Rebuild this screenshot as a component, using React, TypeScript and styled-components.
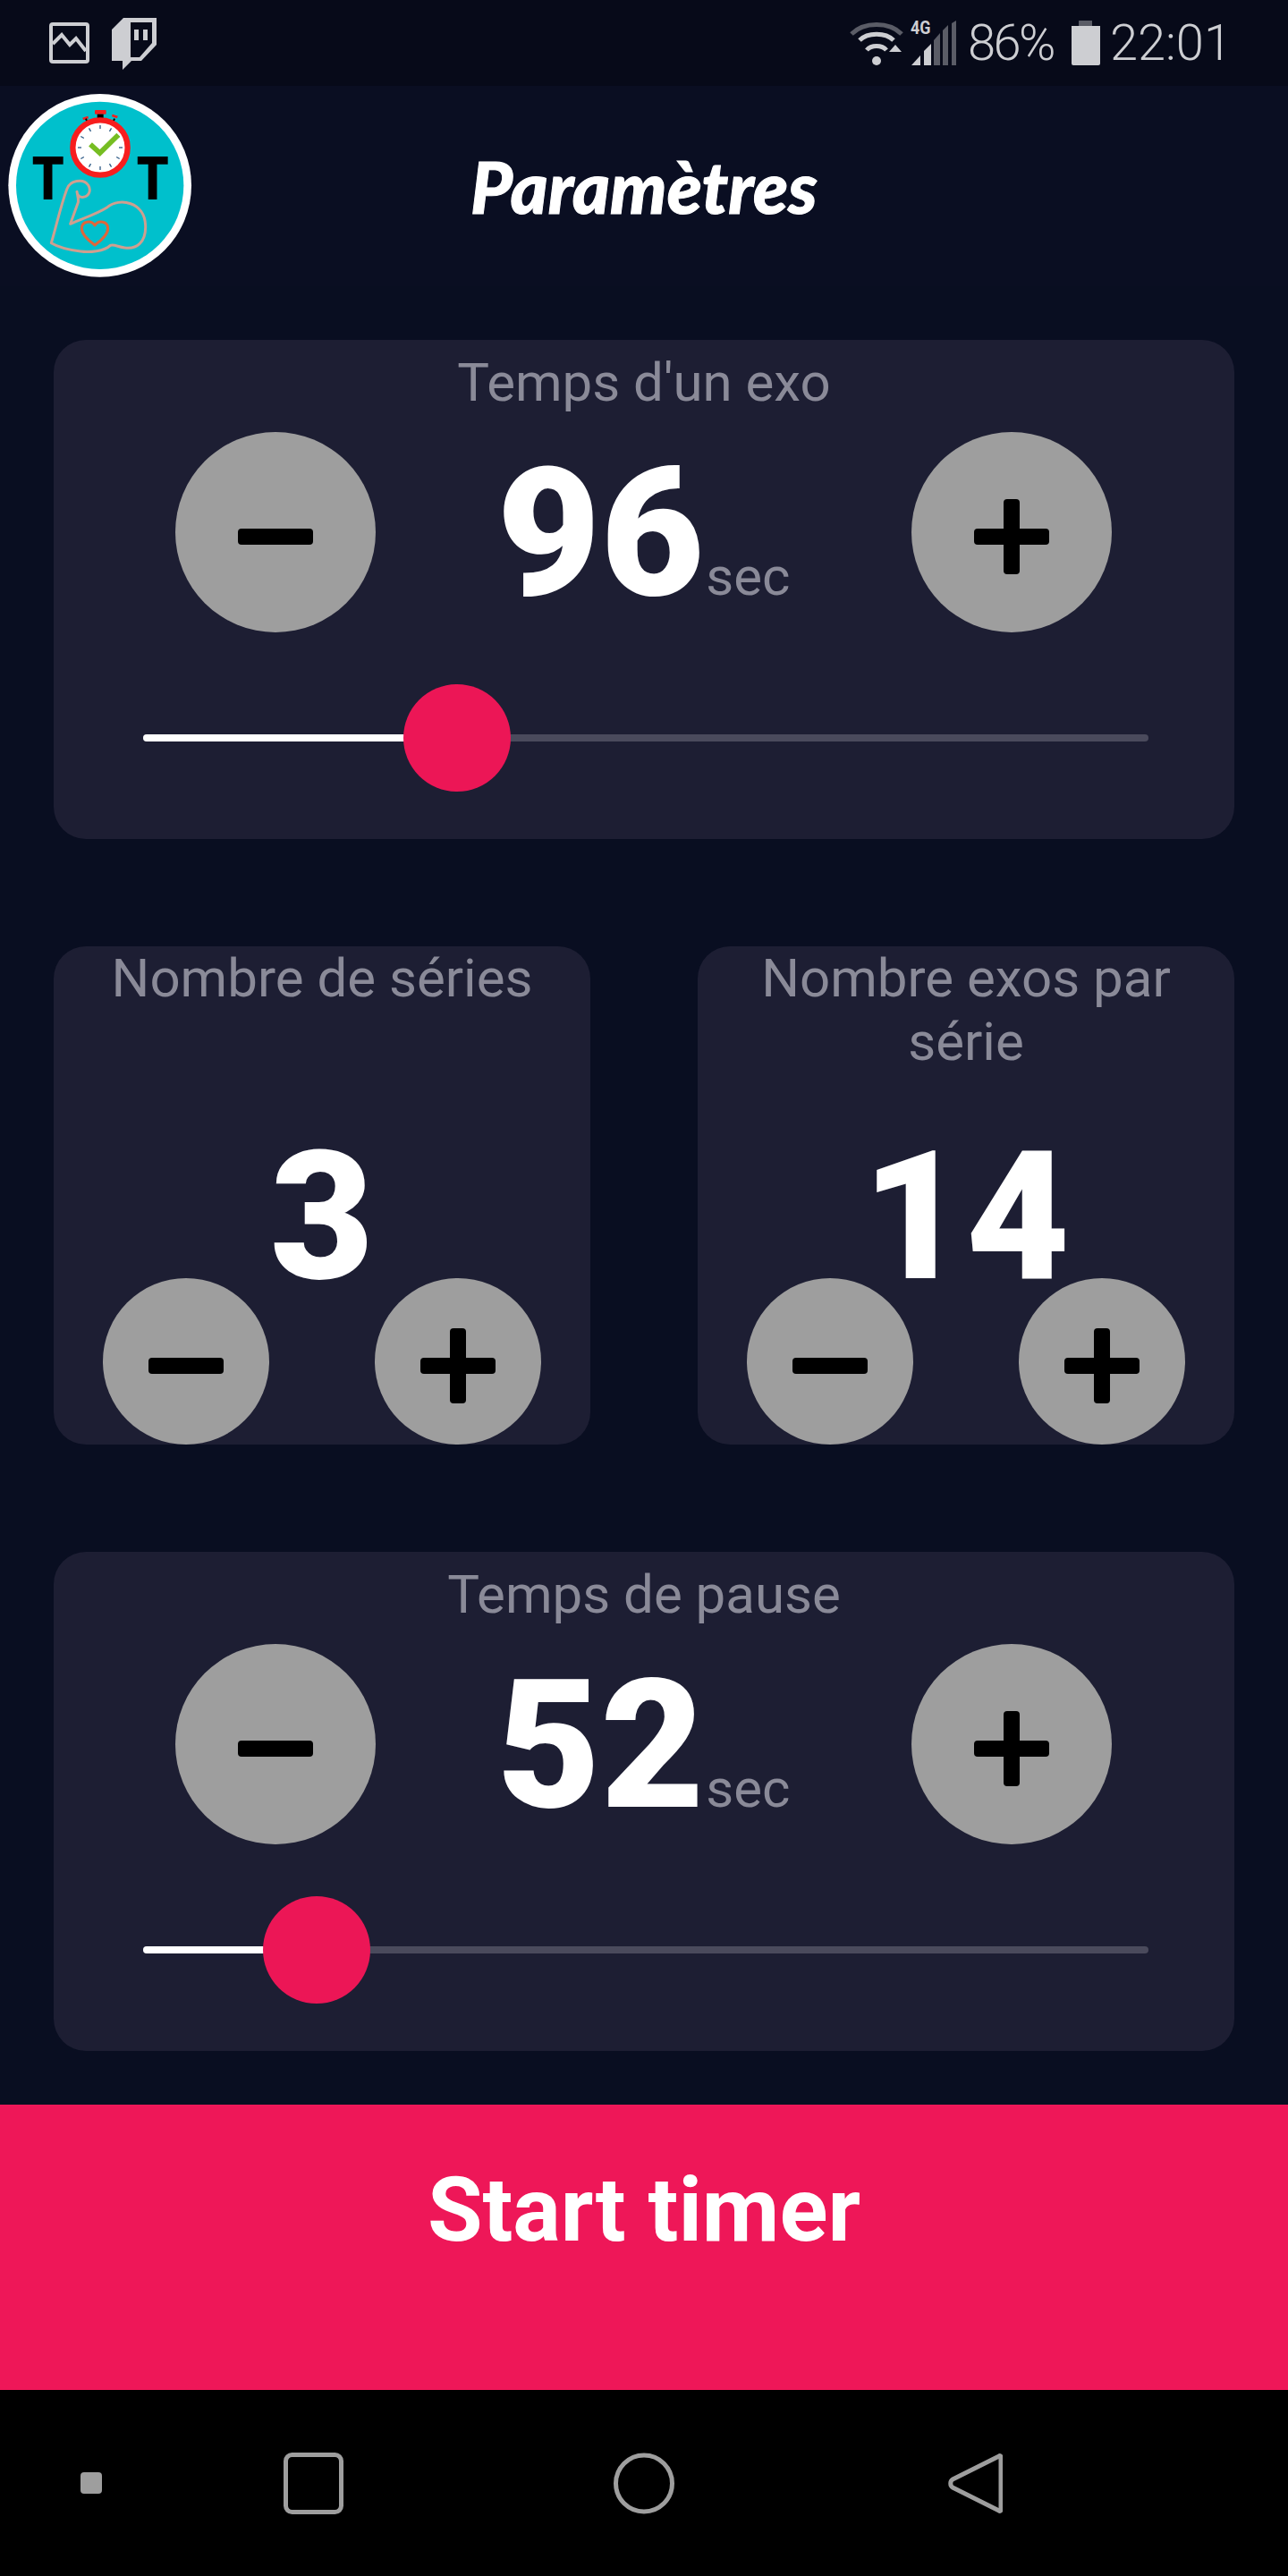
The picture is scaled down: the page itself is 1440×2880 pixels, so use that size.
import React from "react";
import styled, { createGlobalStyle } from "styled-components";

const GlobalStyle = createGlobalStyle`
  html, body {
    margin: 0;
    padding: 0;
    background: #090e21;
  }
  * {
    box-sizing: border-box;
  }
`;

const Page = styled.div`
  width: 1440px;
  height: 2880px;
  display: flex;
  flex-direction: column;
  font-family: Roboto, "Liberation Sans", sans-serif;
  background: #090e21;
  overflow: hidden;
`;

const StatusBar = styled.header`
  height: 96px;
  flex: none;
  display: flex;
  align-items: flex-start;
  justify-content: space-between;
  padding: 20px 63px 0 55px;
  background: #070a19;
  color: #cdced2;
`;

const StatusLeft = styled.div`
  display: flex;
  align-items: flex-start;
  gap: 25px;
`;

const StatusRight = styled.div`
  display: flex;
  align-items: flex-start;
`;

const StatusText = styled.span<{ $gap: number; $tight?: boolean }>`
  font-size: 56px;
  font-weight: 300;
  line-height: 64px;
  letter-spacing: ${(p) => (p.$tight ? "-2.5px" : "0")};
  margin-left: ${(p) => p.$gap}px;
  margin-top: -4px;
`;

const SignalBox = styled.div`
  position: relative;
  width: 51px;
  height: 54px;
  margin-left: 9px;
`;

const NetworkTag = styled.span`
  position: absolute;
  left: -1px;
  top: 1px;
  font-size: 21px;
  line-height: 20px;
  font-weight: 700;
  transform: scaleX(0.85);
  transform-origin: left top;
`;

const StatusIcon = styled.svg<{ $gap?: number; $top?: number }>`
  display: block;
  flex: none;
  margin-left: ${(p) => p.$gap ?? 0}px;
  margin-top: ${(p) => p.$top ?? 0}px;
`;

const SignalBars = styled.svg`
  display: block;
  margin-top: 3px;
`;

const Header = styled.div`
  height: 224px;
  flex: none;
  display: grid;
  grid-template-columns: 230px 1fr 230px;
  background: #0a0e22;
`;

const Logo = styled.svg`
  display: block;
  margin-top: -6px;
`;

const Title = styled.h1`
  margin: 0;
  padding-top: 62px;
  text-align: center;
  color: #fff;
  font-family: "Lato", "Liberation Sans", sans-serif;
  font-size: 80px;
  line-height: 100px;
  font-weight: 900;
  font-style: italic;
  -webkit-text-stroke: 1px #fff;
`;

const Content = styled.main`
  flex: 1;
  padding: 60px 60px 0;
  display: flex;
  flex-direction: column;
  gap: 120px;
`;

const Card = styled.section`
  background: #1d1e33;
  border-radius: 36px;
  height: 557.5px;
  display: flex;
  flex-direction: column;
`;

const Label = styled.div<{ $top: number }>`
  padding: ${(p) => p.$top}px 24px 0;
  text-align: center;
  color: #8a8a98;
  font-size: 60px;
  line-height: 71px;
`;

const Controls = styled.div`
  display: flex;
  align-items: center;
  justify-content: space-between;
  padding: 0 137px 0 136px;
  margin-top: 20px;
`;

const RoundButton = styled.button<{ $size: number }>`
  width: ${(p) => p.$size}px;
  height: ${(p) => p.$size}px;
  flex: none;
  border: 0;
  padding: 9px 0 0;
  border-radius: 50%;
  background: #9e9e9e;
  display: flex;
  align-items: center;
  justify-content: center;
`;

const Reading = styled.div`
  display: flex;
  align-items: baseline;
  gap: 2px;
  margin-top: 4px;
  color: #fff;
`;

const Number = styled.span`
  font-size: 200px;
  font-weight: 900;
  line-height: 200px;
  color: #fff;
`;

const Unit = styled.span`
  font-size: 60px;
  color: #8a8a98;
`;

const Slider = styled.div`
  position: relative;
  height: 8px;
  margin: 114px 96px 0 100px;
  border-radius: 4px;
  background: #4a4a5c;
`;

const SliderFill = styled.div`
  height: 100%;
  border-radius: 4px;
  background: #fff;
`;

const SliderThumb = styled.div`
  position: absolute;
  top: -56px;
  width: 120px;
  height: 120px;
  margin-left: -60px;
  border-radius: 50%;
  background: #ec1656;
`;

const CardRow = styled.div`
  display: grid;
  grid-template-columns: 1fr 1fr;
  gap: 120px;
`;

const CounterValue = styled.div`
  margin-top: auto;
  margin-bottom: -5px;
  text-align: center;
  font-size: 200px;
  font-weight: 900;
  line-height: 146px;
  color: #fff;
`;

const CounterButtons = styled.div`
  display: flex;
  justify-content: space-between;
  padding: 0 55px;
`;

const StartButton = styled.button`
  flex: none;
  height: 319px;
  border: 0;
  padding: 0 0 84px;
  background: #ee1758;
  color: #fff;
  font-family: Roboto, "Liberation Sans", sans-serif;
  font-size: 100px;
  font-weight: 700;
`;

const NavBar = styled.nav`
  flex: none;
  height: 208px;
  display: grid;
  grid-template-columns: 204px 292px 448px 292px 204px;
  align-items: center;
  justify-items: center;
  background: #000;
`;

const NavDot = styled.span`
  width: 24px;
  height: 24px;
  border-radius: 4px;
  background: #9e9e9e;
`;

const Minus = () => (
  <svg width="84" height="84" viewBox="0 0 84 84">
    <rect x="0" y="33" width="84" height="18" rx="4" fill="#000" />
  </svg>
);

const Plus = () => (
  <svg width="84" height="84" viewBox="0 0 84 84">
    <rect x="0" y="33" width="84" height="18" rx="4" fill="#000" />
    <rect x="33" y="0" width="18" height="84" rx="4" fill="#000" />
  </svg>
);

const AppLogo = () => (
  <Logo width="230" height="230" viewBox="0 0 690 690">
    <circle cx="335" cy="352" r="307" fill="#fff" />
    <circle cx="335" cy="352" r="281" fill="#00c0cc" />
    <g fontFamily="Roboto, sans-serif" fontWeight="900" fontSize="198" fill="#000">
      <text x="107" y="400" textLength="108" lengthAdjust="spacingAndGlyphs">T</text>
      <text x="458" y="400" textLength="108" lengthAdjust="spacingAndGlyphs">T</text>
    </g>
    <rect x="318" y="99" width="38" height="14" rx="3" fill="#f71e1e" />
    <rect x="326" y="113" width="21" height="14" fill="#000" />
    <path d="M278 123l18-6M394 117l-18-6" stroke="#f71e1e" strokeWidth="8" transform="translate(0 6)" />
    <path d="M288 128l4 10M384 128l-4 10" stroke="#000" strokeWidth="6" />
    <circle cx="336" cy="225" r="92" fill="#fff" stroke="#f71e1e" strokeWidth="19" />
    <g stroke="#2f5b86" strokeWidth="4">
      {Array.from({ length: 12 }, (_, i) => (
        <line key={i} x1="336" y1="150" x2="336" y2="162" transform={`rotate(${i * 30} 336 225)`} />
      ))}
    </g>
    <path d="M303 214l32 29 62-61" fill="none" stroke="#76bd22" strokeWidth="17" />
    <path
      d="M172 545c18-60 30-120 52-180 10-30 55-38 72-14 10 16 4 36-16 40-12 2-22-6-22-18 2 12 6 24 4 36l-26 72c40-18 90-34 124-56 40-34 126-18 128 62 2 56-30 80-70 74-24-4-36-12-48-8-20 20-70 24-100 20-30-4-68-10-98-28z"
      fill="#00c0cc"
      stroke="#cf9f8f"
      strokeWidth="9"
      strokeLinejoin="round"
    />
    <path
      d="M318 552c-20-14-44-36-44-56 0-24 32-30 44-10 12-20 44-14 44 10 0 20-24 42-44 56z"
      fill="none"
      stroke="#e0663a"
      strokeWidth="9"
      strokeLinejoin="round"
    />
  </Logo>
);

const ImageIcon = () => (
  <StatusIcon $top={5} width="45" height="46" viewBox="0 0 45 46">
    <rect x="2" y="2" width="41" height="42" rx="2" fill="none" stroke="#cdced2" strokeWidth="4" />
    <path d="M4 24l10-10 9 11 7-7 11 14" fill="none" stroke="#cdced2" strokeWidth="4" />
  </StatusIcon>
);

const TwitchIcon = () => (
  <StatusIcon width="50" height="58" viewBox="0 0 50 58">
    <path
      fillRule="evenodd"
      fill="#cdced2"
      d="M13 0H50V30L33 48H22L12 58V48H0V13zM21 5V44H31L45 28V5zM25 13H30V25H25zM35 13H40V25H35z"
    />
  </StatusIcon>
);

const WifiIcon = () => (
  <StatusIcon $top={4} width="60" height="50" viewBox="0 0 60 50">
    <g fill="none" strokeWidth="5">
      <path d="M2 14C16 0 44 0 58 14" stroke="#5a5c66" />
      <path d="M11 21C20 12 40 12 49 21" stroke="#cdced2" />
      <path d="M19 32C24 26 36 26 41 32" stroke="#cdced2" />
    </g>
    <circle cx="30" cy="44" r="5" fill="#cdced2" />
    <path d="M44 34l7-8 7 8z" fill="#cdced2" />
  </StatusIcon>
);

const SignalIcon = () => (
  <SignalBars width="51" height="50" viewBox="0 0 51 50">
    <path d="M0 50L10 39V50z" fill="#cdced2" />
    <path d="M14 50V34L22 26V50z" fill="#cdced2" />
    <path d="M25 50V22L32 14V50z" fill="#5a5c66" />
    <path d="M35 50V11L41 5V50z" fill="#5a5c66" />
    <path d="M45 50V3L50 0V50z" fill="#5a5c66" />
  </SignalBars>
);

const BatteryIcon = () => (
  <StatusIcon $gap={20} $top={3} width="32" height="50" viewBox="0 0 32 50">
    <path d="M0 6H32V48a2 2 0 0 1-2 2H2a2 2 0 0 1-2-2z" fill="#cdced2" />
    <path d="M8 0H23V6H8z" fill="#5a5c66" />
  </StatusIcon>
);

const TimerCard = ({ label, seconds }: { label: string; seconds: number }) => {
  const thumbAt = 8.5 + seconds * 3.568;
  return (
    <Card>
      <Label $top={12}>{label}</Label>
      <Controls>
        <RoundButton $size={224}>
          <Minus />
        </RoundButton>
        <Reading>
          <Number>{seconds}</Number>
          <Unit>sec</Unit>
        </Reading>
        <RoundButton $size={224}>
          <Plus />
        </RoundButton>
      </Controls>
      <Slider>
        <SliderFill style={{ width: thumbAt }} />
        <SliderThumb style={{ left: thumbAt }} />
      </Slider>
    </Card>
  );
};

const CounterCard = ({ label, value }: { label: string; value: number }) => (
  <Card>
    <Label $top={0}>{label}</Label>
    <CounterValue>{value}</CounterValue>
    <CounterButtons>
      <RoundButton $size={186}>
        <Minus />
      </RoundButton>
      <RoundButton $size={186}>
        <Plus />
      </RoundButton>
    </CounterButtons>
  </Card>
);

export default function App() {
  return (
    <Page>
      <GlobalStyle />
      <StatusBar>
        <StatusLeft>
          <ImageIcon />
          <TwitchIcon />
        </StatusLeft>
        <StatusRight>
          <WifiIcon />
          <SignalBox>
            <NetworkTag>4G</NetworkTag>
            <SignalIcon />
          </SignalBox>
          <StatusText $gap={12} $tight>86%</StatusText>
          <BatteryIcon />
          <StatusText $gap={11}>22:01</StatusText>
        </StatusRight>
      </StatusBar>
      <Header>
        <AppLogo />
        <Title>Paramètres</Title>
      </Header>
      <Content>
        <TimerCard label="Temps d'un exo" seconds={96} />
        <CardRow>
          <CounterCard label="Nombre de séries" value={3} />
          <CounterCard label="Nombre exos par série" value={14} />
        </CardRow>
        <TimerCard label="Temps de pause" seconds={52} />
      </Content>
      <StartButton>Start timer</StartButton>
      <NavBar>
        <NavDot />
        <svg width="67" height="69" viewBox="0 0 67 69">
          <rect x="2.5" y="2.5" width="62" height="64" rx="7" fill="none" stroke="#9e9e9e" strokeWidth="5" />
        </svg>
        <svg width="68" height="69" viewBox="0 0 68 69">
          <circle cx="34" cy="34.5" r="31.5" fill="none" stroke="#9e9e9e" strokeWidth="5" />
        </svg>
        <svg width="61" height="69" viewBox="0 0 61 69">
          <path
            d="M57 4c1-1 2 0 2 1v59c0 1-1 2-2 1L5 39c-3-2-3-7 0-9z"
            fill="none"
            stroke="#9e9e9e"
            strokeWidth="5"
            strokeLinejoin="round"
          />
        </svg>
      </NavBar>
    </Page>
  );
}
